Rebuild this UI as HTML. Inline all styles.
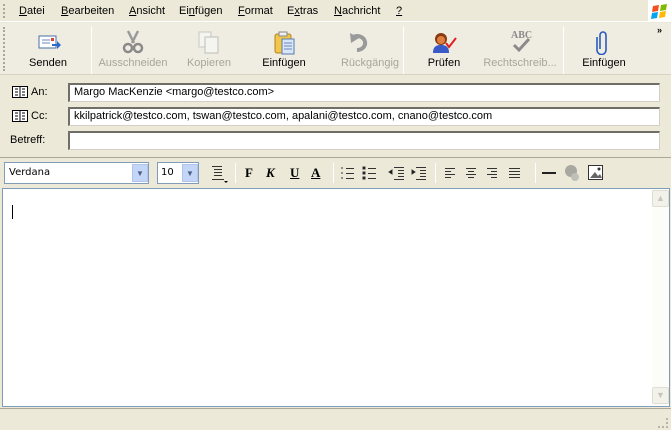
<!DOCTYPE html>
<html><head><style>
*{margin:0;padding:0;box-sizing:border-box}
body{width:671px;height:430px;background:#ECE9D8;font-family:"Liberation Sans",sans-serif;font-size:11px;color:#000;position:relative;overflow:hidden}
.a{position:absolute}
.menu span{position:absolute;top:5px}
.menu u{text-decoration:underline}
.lbl{position:absolute;top:57px;width:90px;text-align:center;font-size:11px}
.dis{color:#A7A69B}
.sep{position:absolute;width:1px;background:#C5C2B2;border-right:1px solid #fff}
.inp{position:absolute;left:68px;width:592px;height:19px;background:#fff;border:1px solid #D4D0C8;border-top:2px solid #6F6E68;border-left:2px solid #6F6E68;padding:1px 4px;font-size:11px}
.fl{position:absolute;left:10px;font-size:11px}
.fb{position:absolute;top:165px;font-weight:bold;font-family:"Liberation Serif",serif;font-size:13px}
</style></head><body>
<div class="a" style="left:0;top:0;width:671px;height:22px;background:#ECE9D8;border-bottom:1px solid #fff"></div>
<div class="a" style="left:3px;top:4px;width:2px;height:14px;border-left:2px dotted #A9A69A"></div>
<div class="menu">
<span style="left:19px"><u>D</u>atei</span>
<span style="left:61px"><u>B</u>earbeiten</span>
<span style="left:129px"><u>A</u>nsicht</span>
<span style="left:179px">Ei<u>n</u>fügen</span>
<span style="left:238px"><u>F</u>ormat</span>
<span style="left:287px">E<u>x</u>tras</span>
<span style="left:334px"><u>N</u>achricht</span>
<span style="left:396px"><u>?</u></span>
</div>
<div class="a" style="left:648px;top:0;width:23px;height:22px;background:#fff"></div>
<svg class="a" style="left:650px;top:2px" width="20" height="18"><path d="M3 4l6-1 -1 6-6 1z" fill="#F25022"/><path d="M11 3l6-1-1 6-6 1z" fill="#7FBA00"/><path d="M2 11l6-1-1 6-6 1z" fill="#00A4EF"/><path d="M10 10l6-1-1 6-6 1z" fill="#FFB900"/></svg>
<div class="a" style="left:0;top:23px;width:671px;height:52px;background:#EFEDE2;border-bottom:1px solid #D8D4C4"></div>
<div class="a" style="left:3px;top:27px;width:2px;height:44px;border-left:2px dotted #A9A69A"></div>
<div class="sep" style="left:91px;top:26px;height:48px"></div>
<div class="sep" style="left:403px;top:26px;height:48px"></div>
<div class="sep" style="left:563px;top:26px;height:48px"></div>
<div class="a" style="left:657px;top:25px;font-size:9px;font-weight:bold">»</div>
<svg class="a" style="left:38px;top:34px" width="24" height="18"><rect x="1" y="2" width="17" height="12" fill="#fff" stroke="#4A6FA5"/><line x1="4" y1="6" x2="12" y2="6" stroke="#6A8AC0"/><line x1="4" y1="9" x2="12" y2="9" stroke="#6A8AC0"/><rect x="13" y="4" width="3" height="3" fill="#E04030"/><path d="M14 10h5v-3l4 4-4 4v-3h-5z" fill="#2E6AC8"/></svg>
<svg class="a" style="left:122px;top:30px" width="22" height="24"><path d="M6 1l6 12M16 1l-6 12" stroke="#9A9A9A" stroke-width="2.5"/><circle cx="6" cy="18" r="4" fill="none" stroke="#8A8A8A" stroke-width="2.5"/><circle cx="16" cy="18" r="4" fill="none" stroke="#8A8A8A" stroke-width="2.5"/></svg>
<svg class="a" style="left:198px;top:31px" width="22" height="24"><rect x="1" y="1" width="12" height="15" fill="#F4F4F0" stroke="#C8C8C0"/><rect x="7" y="6" width="13" height="16" fill="#F4F4F0" stroke="#BEBEB6"/></svg>
<svg class="a" style="left:274px;top:31px" width="22" height="24"><rect x="1" y="3" width="16" height="19" rx="2" fill="#F2C64A" stroke="#B08420"/><rect x="5" y="1" width="8" height="4" fill="#eee" stroke="#888"/><rect x="8" y="8" width="12" height="15" fill="#D8E6F8" stroke="#5A7AB0"/><path d="M10 12h8M10 15h8M10 18h8" stroke="#6A8AC0"/></svg>
<svg class="a" style="left:349px;top:31px" width="22" height="22"><path d="M4 6a8 7 0 1 1 4 13" fill="none" stroke="#9A9A9A" stroke-width="4"/><path d="M1 2l1 10 8-5z" fill="#9A9A9A"/></svg>
<svg class="a" style="left:432px;top:31px" width="26" height="22"><circle cx="9" cy="8" r="6" fill="#8A3A10"/><circle cx="9" cy="9" r="4" fill="#E08040"/><path d="M1 22c0-7 4-8 8-8s8 1 8 8z" fill="#3A5AC8"/><path d="M14 12l3 4 7-9" fill="none" stroke="#E02020" stroke-width="2"/></svg>
<svg class="a" style="left:508px;top:28px" width="26" height="26"><text x="3" y="10" font-family="Liberation Serif" font-weight="bold" font-size="10" fill="#8A8A8A">ABC</text><path d="M6 17l5 5 10-11" fill="none" stroke="#8A8A8A" stroke-width="3"/></svg>
<svg class="a" style="left:596px;top:29px" width="14" height="26"><path d="M4 20V6a3 3 0 0 1 6 0v15a4.5 4.5 0 0 1-9 0V8" fill="none" stroke="#2A5AC0" stroke-width="1.6"/></svg>
<div class="lbl" style="left:3px">Senden</div>
<div class="lbl dis" style="left:88px">Ausschneiden</div>
<div class="lbl dis" style="left:164px">Kopieren</div>
<div class="lbl" style="left:239px">Einfügen</div>
<div class="lbl dis" style="left:325px">Rückgängig</div>
<div class="lbl" style="left:399px">Prüfen</div>
<div class="lbl dis" style="left:475px">Rechtschreib...</div>
<div class="lbl" style="left:559px">Einfügen</div>
<svg class="a" style="left:12px;top:86px" width="16" height="12"><rect x=".5" y=".5" width="15" height="11" fill="#fff" stroke="#000"/><line x1="8" y1="0" x2="8" y2="12" stroke="#000"/><path d="M3 3h3M3 6h3M3 9h3M10 3h3M10 6h3M10 9h3" stroke="#000"/></svg>
<div class="fl" style="left:31px;top:86px">An:</div>
<svg class="a" style="left:12px;top:110px" width="16" height="12"><rect x=".5" y=".5" width="15" height="11" fill="#fff" stroke="#000"/><line x1="8" y1="0" x2="8" y2="12" stroke="#000"/><path d="M3 3h3M3 6h3M3 9h3M10 3h3M10 6h3M10 9h3" stroke="#000"/></svg>
<div class="fl" style="left:31px;top:110px">Cc:</div>
<div class="fl" style="top:134px">Betreff:</div>
<div class="inp" style="top:83px">Margo MacKenzie &lt;margo@testco.com&gt;</div>
<div class="inp" style="top:107px">kkilpatrick@testco.com, tswan@testco.com, apalani@testco.com, cnano@testco.com</div>
<div class="inp" style="top:131px"></div>
<div class="a" style="left:0;top:157px;width:671px;height:1px;background:#ACA899"></div>
<div class="a" style="left:4px;top:162px;width:145px;height:22px;background:#fff;border:1px solid #7F9DB9;padding:4px 4px;font-family:Verdana,'DejaVu Sans',sans-serif;font-size:10px">Verdana</div>
<div class="a" style="left:132px;top:164px;width:16px;height:18px;background:#C4D6F8;border:1px solid #B0C4EC;color:#4D6185;font-size:8px;text-align:center;line-height:17px">▼</div>
<div class="a" style="left:157px;top:162px;width:42px;height:22px;background:#fff;border:1px solid #7F9DB9;padding:4px 3px;font-family:Verdana,'DejaVu Sans',sans-serif;font-size:10px">10</div>
<div class="a" style="left:182px;top:164px;width:16px;height:18px;background:#C4D6F8;border:1px solid #B0C4EC;color:#4D6185;font-size:8px;text-align:center;line-height:17px">▼</div>
<svg class="a" style="left:210px;top:164px" width="20" height="20"><path d="M2 2.5h10M4 5.5h8M4 8.5h8M4 11.5h8M2 15.5h12" stroke="#333"/><path d="M14 17h4l-2 2z" fill="#000"/></svg>
<div class="sep" style="left:235px;top:163px;height:20px"></div>
<div class="fb" style="left:245px">F</div>
<div class="fb" style="left:266px;font-style:italic">K</div>
<div class="fb" style="left:290px;text-decoration:underline">U</div>
<div class="fb" style="left:311px;text-decoration:underline">A</div>
<div class="sep" style="left:333px;top:163px;height:20px"></div>
<svg class="a" style="left:340px;top:164px" width="100" height="18"><g stroke="#333"><path d="M6 4.5h8M6 9.5h8M6 14.5h8M2 3v2M2 8v2M2 13v2"/><path d="M28 4.5h8M28 9.5h8M28 14.5h8"/><path d="M23 3h2v2h-2zM23 8h2v2h-2zM23 13h2v2h-2z"/><path d="M54 3.5h10M58 6.5h6M58 9.5h6M58 12.5h6M54 15.5h10M49 8l3-2v4z"/><path d="M76 3.5h10M80 6.5h6M80 9.5h6M80 12.5h6M76 15.5h10M75 8l-3-2v4z"/></g></svg>
<div class="sep" style="left:435px;top:163px;height:20px"></div>
<svg class="a" style="left:442px;top:164px" width="90" height="18"><g stroke="#333"><path d="M3 4.5h10M3 7.5h6M3 10.5h10M3 13.5h6"/><path d="M24 4.5h10M26 7.5h6M24 10.5h10M26 13.5h6"/><path d="M45 4.5h10M49 7.5h6M45 10.5h10M49 13.5h6"/><path d="M67 4.5h11M67 7.5h11M67 10.5h11M67 13.5h11"/></g></svg>
<div class="sep" style="left:535px;top:163px;height:20px"></div>
<div class="a" style="left:542px;top:172px;width:14px;height:2px;background:#222"></div>
<svg class="a" style="left:563px;top:164px" width="18" height="18"><circle cx="8" cy="7" r="6" fill="#A8A8A0"/><circle cx="12" cy="13" r="4" fill="#C0C0B8"/></svg>
<svg class="a" style="left:588px;top:165px" width="16" height="16"><rect x=".5" y=".5" width="14" height="14" fill="#fff" stroke="#333"/><path d="M2 13l5-6 3 4 2-2 2 4z" fill="#666"/><circle cx="11" cy="4" r="1.5" fill="#333"/></svg>
<div class="a" style="left:2px;top:188px;width:668px;height:219px;background:#fff;border:1px solid #7F9DB9"></div>
<div class="a" style="left:12px;top:205px;width:1px;height:14px;background:#000"></div>
<div class="a" style="left:652px;top:189px;width:17px;height:217px;background:#FCFCF9"></div>
<div class="a" style="left:652px;top:190px;width:17px;height:17px;background:#F2F1EA;border:1px solid #E0DED2;border-radius:2px;color:#C8C6BA;font-size:9px;text-align:center;line-height:15px">▲</div>
<div class="a" style="left:652px;top:387px;width:17px;height:17px;background:#F2F1EA;border:1px solid #E0DED2;border-radius:2px;color:#C8C6BA;font-size:9px;text-align:center;line-height:15px">▼</div>
<div class="a" style="left:0;top:408px;width:671px;height:1px;background:#ACA899"></div>
<div class="a" style="left:658px;top:418px;width:10px;height:10px;border-right:2px dotted #B8B5A6;border-bottom:2px dotted #B8B5A6"></div>
</body></html>
